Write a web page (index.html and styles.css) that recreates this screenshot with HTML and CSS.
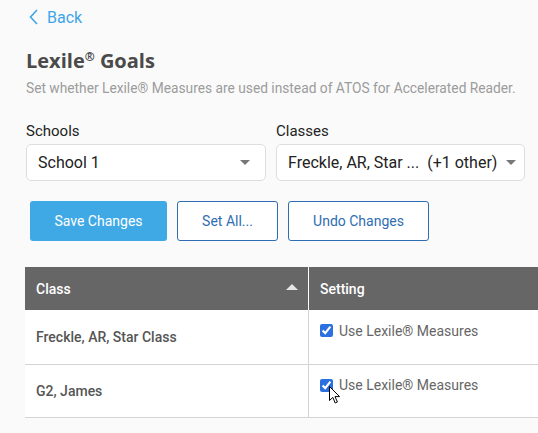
FILE: index.html
```html
<!DOCTYPE html>
<html lang="en">
    <head>
        <meta charset="UTF-8">
        <meta name="viewport" content="width=device-width, initial-scale=1.0">
        <title>Lexile Goals</title>
        <link rel="stylesheet" href="styles.css">
    </head>

    <body>
        <div class="page">
            <a class="back" href="#">
                <svg class="back-icon" width="9" height="16" viewBox="0 0 9 16">
                    <path d="M8 1L1.5 8L8 15" fill="none" stroke="#3da5e8" stroke-width="1.6"/>
                </svg>
                Back
            </a>

            <h1 class="title">Lexile<sup>®</sup> Goals</h1>
            <p class="subtitle">Set whether Lexile® Measures are used instead of ATOS for Accelerated Reader.</p>

            <div class="filters">
                <div class="field field-schools">
                    <label class="field-label">Schools</label>
                    <div class="select">
                        <span>School 1</span>
                        <span class="caret"></span>
                    </div>
                </div>
                <div class="field field-classes">
                    <label class="field-label">Classes</label>
                    <div class="select">
                        <span>Freckle, AR, Star ...&nbsp; (+1 other)</span>
                        <span class="caret"></span>
                    </div>
                </div>
            </div>

            <div class="actions">
                <button class="btn btn-primary">Save Changes</button>
                <button class="btn btn-outline btn-setall">Set All...</button>
                <button class="btn btn-outline btn-undo">Undo Changes</button>
            </div>

            <table class="goals">
                <thead>
                    <tr>
                        <th class="col-class">Class <span class="sort-up"></span></th>
                        <th class="col-setting">Setting</th>
                    </tr>
                </thead>
                <tbody>
                    <tr class="row-first">
                        <td class="col-class">Freckle, AR, Star Class</td>
                        <td class="col-setting">
                            <label class="check"><input type="checkbox" checked> Use Lexile® Measures</label>
                        </td>
                    </tr>
                    <tr class="row-last">
                        <td class="col-class">G2, James</td>
                        <td class="col-setting">
                            <label class="check"><input type="checkbox" checked> Use Lexile® Measures</label>
                            <svg class="cursor" width="12" height="18" viewBox="0 0 12 18">
                                <path d="M0.5 0.5L0.5 14.5L3.8 11.4L6.2 17L8.4 16L6 10.6L10.6 10.6Z" fill="#ffffff" stroke="#000000" stroke-width="1"/>
                            </svg>
                        </td>
                    </tr>
                </tbody>
            </table>
        </div>
    </body>
</html>
```

FILE: styles.css
```css
body {
    margin: 0;
    background-color: #fafafa;
    font-family: 'Roboto', 'Liberation Sans', sans-serif;
    overflow: hidden;
}

.page {
    padding: 0 0 0 25px;
}

.back {
    display: flex;
    align-items: center;
    gap: 9px;
    height: 20px;
    padding: 7px 0 0 4px;
    color: #3da5e8;
    font-size: 16px;
    text-decoration: none;
}

.title {
    margin: 20px 0 0 1px;
    font-family: 'Open Sans', sans-serif;
    font-size: 20px;
    font-weight: 700;
    line-height: 28px;
    color: #4a4a4a;
}

.title sup {
    font-size: 12px;
    vertical-align: 7px;
    line-height: 0;
}

.subtitle {
    margin: 4px 0 0 1px;
    font-size: 13.75px;
    line-height: 18px;
    color: #9c9c9c;
}

.filters {
    display: flex;
    gap: 10px;
    margin-top: 25px;
    padding-left: 1px;
}

.field-schools {
    width: 240px;
}

.field-classes {
    width: 249px;
}

.field-label {
    display: block;
    font-size: 15px;
    line-height: 18px;
    color: #222222;
}

.select {
    display: flex;
    align-items: center;
    justify-content: space-between;
    box-sizing: border-box;
    height: 37px;
    margin-top: 4px;
    padding: 0 15px 0 11px;
    background-color: #ffffff;
    border: 1px solid #dedede;
    border-radius: 5px;
    font-size: 16px;
    color: #222222;
}

.field-classes .select {
    padding-right: 8px;
}

.caret {
    width: 0;
    height: 0;
    border-left: 5px solid transparent;
    border-right: 5px solid transparent;
    border-top: 5px solid #777777;
}

.actions {
    display: flex;
    gap: 10px;
    margin: 20px 0 0 5px;
}

.btn {
    height: 40px;
    border-radius: 3px;
    font-family: 'Roboto', sans-serif;
    font-size: 14px;
    cursor: pointer;
}

.btn-primary {
    width: 137px;
    background-color: #3fa9e6;
    border: none;
    color: #ffffff;
}

.btn-outline {
    background-color: #ffffff;
    border: 1px solid #2f6db3;
    color: #2f6db3;
}

.btn-setall {
    width: 101px;
}

.btn-undo {
    width: 141px;
}

.goals {
    margin-top: 26px;
    width: 540px;
    border-collapse: collapse;
    font-size: 14px;
}

.goals th {
    height: 43px;
    padding: 0 10px 0 11px;
    background-color: #666666;
    color: #ffffff;
    font-weight: 500;
    text-align: left;
}

.goals th.col-class {
    width: 262px;
    border-right: 1px solid #ffffff;
}

.sort-up {
    float: right;
    margin: 3px 0 0 0;
    width: 0;
    height: 0;
    border-left: 6px solid transparent;
    border-right: 6px solid transparent;
    border-bottom: 6px solid #e6e6e6;
}

.goals td {
    padding: 0 10px 0 11px;
    background-color: #ffffff;
    border-bottom: 1px solid #d4d4d4;
    color: #555555;
}

.row-first {
    height: 54px;
}

.row-last {
    height: 53px;
}

.goals td.col-class {
    font-weight: 500;
    border-right: 1px solid #d4d4d4;
}

.goals td.col-setting {
    position: relative;
    vertical-align: top;
    padding-top: 11px;
}

.check {
    display: flex;
    align-items: center;
    color: #666666;
}

.check input {
    margin: 3px 6px 3px 0;
    accent-color: #2c6fe0;
}

.cursor {
    position: absolute;
    left: 20px;
    top: 21px;
}
```
